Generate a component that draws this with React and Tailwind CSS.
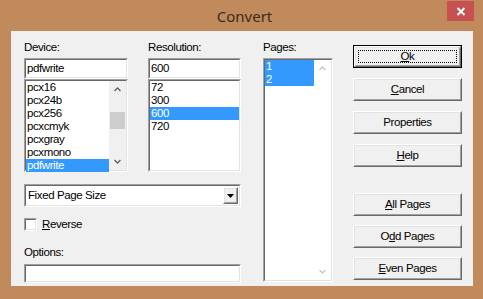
import React from "react";

function Sunken({ className = "", innerClass = "", children }) {
  return (
    <div className={"border border-t-[#a0a0a0] border-l-[#a0a0a0] border-b-white border-r-white " + className}>
      <div className={"w-full h-full border border-t-[#696969] border-l-[#696969] border-b-[#e3e3e3] border-r-[#e3e3e3] " + innerClass}>
        {children}
      </div>
    </div>
  );
}

function Raised({ className = "", innerClass = "", children }) {
  return (
    <div className={"border border-t-white border-l-white border-b-[#696969] border-r-[#696969] " + className}>
      <div className={"w-full h-full border border-t-[#e3e3e3] border-l-[#e3e3e3] border-b-[#a0a0a0] border-r-[#a0a0a0] bg-[#f0f0f0] " + innerClass}>
        {children}
      </div>
    </div>
  );
}

function Btn({ children, def }) {
  if (def) {
    return (
      <div className="w-[109px] h-[23px] border border-black">
        <Raised className="w-full h-full" innerClass="p-[2px]">
          <div className="w-full h-full border border-dotted border-black flex items-center justify-center leading-none">
            {children}
          </div>
        </Raised>
      </div>
    );
  }
  return (
    <Raised className="w-[109px] h-[23px]" innerClass="flex items-center justify-center leading-none">
      {children}
    </Raised>
  );
}

function Up({ color = "#000" }) {
  return (
    <svg width="7" height="5" viewBox="0 0 7 5">
      <path d="M0.5 4 L3.5 1 L6.5 4" fill="none" stroke={color} strokeWidth="1.4" />
    </svg>
  );
}
function Down({ color = "#000" }) {
  return (
    <svg width="7" height="5" viewBox="0 0 7 5">
      <path d="M0.5 1 L3.5 4 L6.5 1" fill="none" stroke={color} strokeWidth="1.4" />
    </svg>
  );
}

function Item({ children, sel }) {
  return (
    <div className={"h-[13px] leading-[13px] pl-[1px] " + (sel ? "bg-[#3399ff] text-white" : "")}>{children}</div>
  );
}

export default function App() {
  const devices = ["pcx16", "pcx24b", "pcx256", "pcxcmyk", "pcxgray", "pcxmono", "pdfwrite"];
  const res = ["72", "300", "600", "720"];
  return (
    <div className="w-[483px] h-[299px] bg-[#c18a5c] flex flex-col font-['Liberation_Sans',Arial,sans-serif] text-[11.5px] tracking-[-0.4px] text-black overflow-hidden">
      <div className="h-[31px] relative flex items-center justify-center">
        <span className="font-['Noto_Sans',sans-serif] text-[15px] tracking-normal text-[#3d2a18] ml-[6px] mt-[1px]">Convert</span>
        <div className="absolute right-[9px] top-[1px] w-[27px] h-[20px] bg-[#c75050] flex items-center justify-center">
          <svg width="10" height="9" viewBox="0 0 10 9">
            <path d="M1.5 1 L8.5 8 M8.5 1 L1.5 8" stroke="#fff" strokeWidth="2" />
          </svg>
        </div>
      </div>
      <div className="ml-[11px] w-[462px] h-[255px] bg-[#f0f0f0] flex pl-[13px] pt-[10px]">
        {/* left area */}
        <div className="w-[217px] flex flex-col">
          <div className="flex gap-[20px]">
            <div className="w-[104px] flex flex-col">
              <div className="h-[17px] leading-[13px]">Device:</div>
              <Sunken className="h-[21px] bg-white" innerClass="flex items-center pl-[1px]">pdfwrite</Sunken>
              <Sunken className="h-[93px] bg-white" innerClass="flex">
                <div className="flex-1 flex flex-col">
                  {devices.map((d) => (
                    <Item key={d} sel={d === "pdfwrite"}>{d}</Item>
                  ))}
                </div>
                <div className="w-[17px] bg-[#f0f0f0] flex flex-col">
                  <div className="h-[17px] flex items-center justify-center"><Up color="#606060" /></div>
                  <div className="flex-1 relative">
                    <div className="absolute left-[1px] right-[1px] top-[14px] h-[17px] bg-[#cdcdcd]"></div>
                  </div>
                  <div className="h-[17px] flex items-center justify-center"><Down color="#606060" /></div>
                </div>
              </Sunken>
            </div>
            <div className="w-[93px] flex flex-col">
              <div className="h-[17px] leading-[13px]">Resolution:</div>
              <Sunken className="h-[21px] bg-white" innerClass="flex items-center pl-[1px]">600</Sunken>
              <Sunken className="h-[93px] bg-white" innerClass="flex flex-col">
                {res.map((r) => (
                  <Item key={r} sel={r === "600"}>{r}</Item>
                ))}
              </Sunken>
            </div>
          </div>
          <Sunken className="mt-[12px] h-[23px] bg-white" innerClass="flex items-center">
            <div className="flex-1 pl-[2px]">Fixed Page Size</div>
            <Raised className="w-[15px] h-[17px] mr-[1px]" innerClass="flex items-center justify-center">
              <svg width="7" height="4" viewBox="0 0 7 4"><path d="M0 0 H7 L3.5 4 Z" fill="#000" /></svg>
            </Raised>
          </Sunken>
          <div className="mt-[11px] h-[13px] flex items-center">
            <Sunken className="w-[13px] h-[13px] bg-white" />
            <span className="ml-[5px] leading-none"><u>R</u>everse</span>
          </div>
          <div className="mt-[15px] h-[18px] leading-[13px]">Options:</div>
          <Sunken className="h-[19px] bg-white" />
        </div>
        {/* pages */}
        <div className="ml-[22px] w-[70px] flex flex-col">
          <div className="h-[17px] leading-[13px]">Pages:</div>
          <Sunken className="h-[224px] bg-white" innerClass="flex">
            <div className="flex-1 flex flex-col">
              <Item sel>1</Item>
              <Item sel>2</Item>
            </div>
            <div className="w-[17px] flex flex-col justify-between">
              <div className="h-[17px] flex items-center justify-center"><Up color="#c8c8c8" /></div>
              <div className="h-[17px] flex items-center justify-center"><Down color="#c8c8c8" /></div>
            </div>
          </Sunken>
        </div>
        {/* buttons */}
        <div className="ml-[20px] mt-[4px] flex flex-col">
          <div className="flex flex-col gap-[10px]">
            <Btn def><u>O</u>k</Btn>
            <Btn><u>C</u>ancel</Btn>
            <Btn>Properties</Btn>
            <Btn><u>H</u>elp</Btn>
          </div>
          <div className="mt-[26px] flex flex-col gap-[9px]">
            <Btn><u>A</u>ll Pages</Btn>
            <Btn>O<u>d</u>d Pages</Btn>
            <Btn><u>E</u>ven Pages</Btn>
          </div>
        </div>
      </div>
    </div>
  );
}
